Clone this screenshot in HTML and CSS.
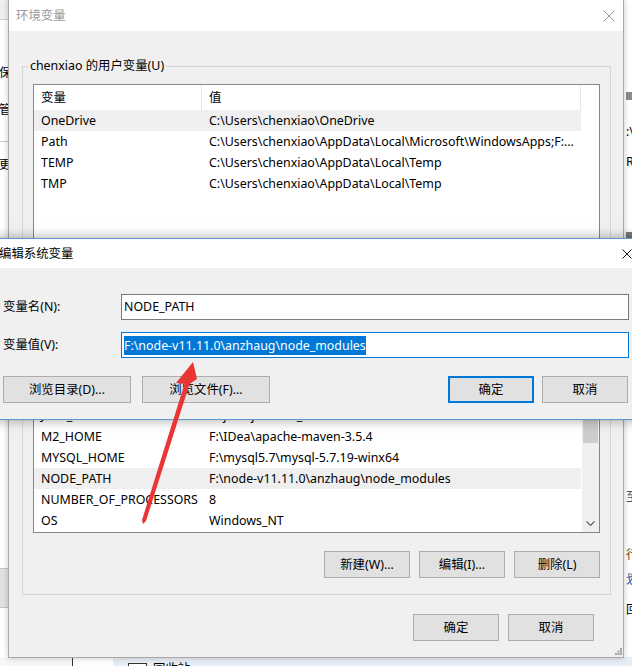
FILE: index.html
```html
<!DOCTYPE html>
<html lang="zh-CN">
<head>
<meta charset="utf-8">
<title>环境变量</title>
<link rel="stylesheet" href="styles.css">
</head>
<body>
<div class="bg bg-left">
  <div class="bl-top"></div>
  <div class="bl-t">保存</div>
  <div class="bl-t bl-t2">管理</div>
  <div class="bl-line"></div>
  <div class="bl-t bl-t3">更改</div>
  <div class="bl-band"></div>
</div>
<div class="bg bg-right">
  <div class="br-bar1"></div>
  <div class="br-t br-t1">:\W</div>
  <div class="br-t br-t2">R</div>
  <div class="br-bar2"></div>
  <div class="br-t br-t3">至</div>
  <div class="br-t br-t4">行</div>
  <div class="br-t br-t5">划</div>
  <div class="br-t br-t6">回</div>
</div>
<div class="bg bg-bottom">
  <div class="bb-a"></div>
  <div class="bb-b"></div>
  <div class="bb-c"><span class="bb-check"></span><span class="bb-text">回收站</span></div>
</div>

<div class="win main">
  <div class="titlebar">
    <span class="title inactive">环境变量</span>
    <svg class="close" width="12" height="12" viewBox="0 0 12 12"><path d="M0.5 0.5L11.5 11.5M11.5 0.5L0.5 11.5" stroke="#9a9a9a" stroke-width="1" fill="none"/></svg>
  </div>
  <div class="main-body">
    <fieldset class="group user">
      <legend>chenxiao 的用户变量(U)</legend>
      <div class="list">
        <div class="lhead"><div class="c1">变量</div><div class="c2">值</div></div>
        <div class="lrows">
          <div class="rows">
            <div class="row sel"><div class="c1">OneDrive</div><div class="c2">C:\Users\chenxiao\OneDrive</div></div>
            <div class="row"><div class="c1">Path</div><div class="c2">C:\Users\chenxiao\AppData\Local\Microsoft\WindowsApps;F:...</div></div>
            <div class="row"><div class="c1">TEMP</div><div class="c2">C:\Users\chenxiao\AppData\Local\Temp</div></div>
            <div class="row"><div class="c1">TMP</div><div class="c2">C:\Users\chenxiao\AppData\Local\Temp</div></div>
          </div>
        </div>
      </div>
      <div class="btns">
        <button class="btn">新建(N)...</button>
        <button class="btn">编辑(E)...</button>
        <button class="btn">删除(D)</button>
      </div>
    </fieldset>
    <fieldset class="group sys">
      <legend>系统变量(S)</legend>
      <div class="list">
        <div class="lhead"><div class="c1">变量</div><div class="c2">值</div></div>
        <div class="lrows">
          <div class="rows">
            <div class="row"><div class="c1">ComSpec</div><div class="c2">C:\Windows\system32\cmd.exe</div></div>
            <div class="row"><div class="c1">JAVA_HOME</div><div class="c2">F:\java\jdk1.8.0_191</div></div>
            <div class="row"><div class="c1">M2_HOME</div><div class="c2">F:\IDea\apache-maven-3.5.4</div></div>
            <div class="row"><div class="c1">MYSQL_HOME</div><div class="c2">F:\mysql5.7\mysql-5.7.19-winx64</div></div>
            <div class="row sel"><div class="c1">NODE_PATH</div><div class="c2">F:\node-v11.11.0\anzhaug\node_modules</div></div>
            <div class="row"><div class="c1">NUMBER_OF_PROCESSORS</div><div class="c2">8</div></div>
            <div class="row"><div class="c1">OS</div><div class="c2">Windows_NT</div></div>
          </div>
          <div class="sbar">
            <div class="sb-up"></div>
            <div class="sb-thumb"></div>
            <div class="sb-track"></div>
            <div class="sb-down"><svg width="9" height="6" viewBox="0 0 9 6"><path d="M0.5 0.5L4.5 4.5L8.5 0.5" stroke="#606060" stroke-width="1.2" fill="none"/></svg></div>
          </div>
        </div>
      </div>
      <div class="btns">
        <button class="btn">新建(W)...</button>
        <button class="btn">编辑(I)...</button>
        <button class="btn">删除(L)</button>
      </div>
    </fieldset>
    <div class="footer">
      <button class="btn">确定</button>
      <button class="btn">取消</button>
    </div>
  </div>
  <svg class="grip" width="7" height="7" viewBox="0 0 7 7"><g fill="#a0a0a0"><rect x="5" y="0" width="2" height="2"/><rect x="2.5" y="2.5" width="2" height="2"/><rect x="5" y="2.5" width="2" height="2"/><rect x="0" y="5" width="2" height="2"/><rect x="2.5" y="5" width="2" height="2"/><rect x="5" y="5" width="2" height="2"/></g></svg>
</div>

<div class="win dialog">
  <div class="dtitle">
    <span class="title">编辑系统变量</span>
    <svg class="close" width="10" height="10" viewBox="0 0 10 10"><path d="M0.5 0.5L9.5 9.5M9.5 0.5L0.5 9.5" stroke="#111" stroke-width="1" fill="none"/></svg>
  </div>
  <div class="dbody">
    <div class="frow">
      <label class="flabel">变量名(N):</label>
      <div class="finput">NODE_PATH</div>
    </div>
    <div class="frow">
      <label class="flabel">变量值(V):</label>
      <div class="finput focus"><span class="selected">F:\node-v11.11.0\anzhaug\node_modules</span></div>
    </div>
    <div class="dbtns">
      <button class="btn wide">浏览目录(D)...</button>
      <button class="btn wide">浏览文件(F)...</button>
      <span class="spacer"></span>
      <button class="btn default">确定</button>
      <button class="btn">取消</button>
    </div>
  </div>
</div>

<svg class="arrow" width="632" height="666" viewBox="0 0 632 666">
  <polygon points="193,362 197,379 189.5,384 146,521 143,524 142,520 184.5,384 176,383" fill="#ea3535"/>
</svg>
</body>
</html>
```

FILE: styles.css
```css
* { box-sizing: border-box; margin: 0; padding: 0; }
html, body { width: 632px; height: 666px; overflow: hidden; }
body {
  position: relative;
  background: #fff;
  font-family: "Noto Sans", "Noto Sans CJK SC", sans-serif;
  font-size: 12.4px;
  line-height: 16px;
  color: #000;
}

/* background windows */
.bg { position: absolute; overflow: hidden; }
.bg-left { left: -1px; top: 0; width: 20px; height: 657px; background: #fff; display: flex; flex-direction: column; }
.bl-top { height: 20px; background: #f0f0f0; border-bottom: 1px solid #cfcfcf; }
.bl-t { margin-top: 46px; line-height: 14px; white-space: nowrap; }
.bl-t2 { margin-top: 23px; }
.bl-line { margin-top: 24px; height: 1px; background: #c8c8c8; }
.bl-t3 { margin-top: 16px; }
.bl-band { margin-top: 396px; height: 40px; background: #e2e2e2; border-top: 1px solid #c6c6c6; border-bottom: 1px solid #c6c6c6; }

.bg-right { left: 623px; top: 0; width: 20px; height: 657px; background: #fff; display: flex; flex-direction: column; padding-left: 3px; }
.br-bar1 { margin-top: 92px; height: 8px; background: #8c8c8c; }
.br-t { line-height: 14px; white-space: nowrap; }
.br-t1 { margin-top: 25px; }
.br-t2 { margin-top: 16px; }
.br-bar2 { margin-top: 63px; height: 6px; background: #7a7a7a; }
.br-t3 { margin-top: 252px; color: #555; }
.br-t4 { margin-top: 44px; color: #7a4a10; }
.br-t5 { margin-top: 11px; color: #1f5fa8; }
.br-t6 { margin-top: 16px; }

.bg-bottom { left: 0; top: 657px; width: 632px; height: 9px; display: flex; background: #fff; }
.bb-a { width: 72px; background: #f7f7f7; }
.bb-b { width: 41px; border-left: 1px solid #333; background: #fff; }
.bb-c { flex: 1; background: #e8eef6; display: flex; align-items: flex-start; padding: 6px 0 0 15px; gap: 6px; }
.bb-check { width: 19px; height: 19px; border: 1px solid #333; background: #fff; }
.bb-text { margin-top: -1px; line-height: 14px; }

/* windows */
.win { position: absolute; display: flex; flex-direction: column; }
.main {
  left: 8px; top: -1px; width: 616px; height: 659px;
  border: 1px solid #a8a8a8; background: #f0f0f0;
  box-shadow: 0 0 6px rgba(0,0,0,.22);
}
.titlebar {
  height: 31px; flex: none; background: #fff;
  display: flex; align-items: center; justify-content: space-between;
  padding: 0 8px 0 7px;
}
.title { line-height: 16px; }
.title.inactive { color: #999; }
.close { display: block; flex: none; }

.main-body { flex: 1; display: flex; flex-direction: column; padding: 0 12px 0 13px; }
.group { border: 1px solid #d5d5d5; padding: 10px 10px 16px; min-width: 0; }
.group legend { padding: 0 2px; margin-left: -5px; line-height: 16px; }
.user { margin-top: 27px; }
.sys { margin-top: 11px; }

.list { height: 175px; border: 1px solid #828790; background: #fff; display: flex; flex-direction: column; }
.lhead { height: 25px; flex: none; display: flex; }
.lhead > div { display: flex; align-items: center; border-right: 1px solid #e5e5e5; }
.lrows { flex: 1; display: flex; min-height: 0; }
.rows { width: 547px; }
.row { display: flex; height: 21px; align-items: center; }
.row.sel { background: #efefef; }
.c1 { width: 168px; padding-left: 7px; white-space: nowrap; }
.c2 { width: 379px; padding-left: 7px; white-space: nowrap; overflow: hidden; }

.sbar { width: 17px; margin-left: 1px; background: #f0f0f0; display: flex; flex-direction: column; }
.sb-up { height: 17px; }
.sb-thumb { height: 41px; margin: 1px 1px 0; background: #cdcdcd; }
.sb-track { flex: 1; }
.sb-down { height: 17px; display: flex; align-items: center; justify-content: center; }

.btns { display: flex; justify-content: flex-end; gap: 9px; margin-top: 18px; }
.btn {
  width: 86px; height: 27px; flex: none;
  background: #e1e1e1; border: 1px solid #adadad;
  font: inherit; color: #000; line-height: 16px;
}
.btn.wide { width: 128px; }
.btn.default { border: 2px solid #0078d7; }

.footer { display: flex; justify-content: flex-end; gap: 9px; margin-top: 19px; padding-right: 17px; }

.grip { position: absolute; right: 1px; bottom: 2px; }

/* dialog */
.dialog {
  left: -10px; top: 238px; width: 660px; height: 182px;
  border: 1px solid #5f97d1; background: #f0f0f0;
  box-shadow: 0 0 12px rgba(0,0,0,.35);
}
.dtitle {
  height: 29px; flex: none; background: #fff;
  display: flex; align-items: center; justify-content: space-between;
  padding: 0 17px 0 8px;
}
.dbody { flex: 1; display: flex; flex-direction: column; padding: 26px 20px 0 12px; }
.frow { display: flex; align-items: center; height: 26px; }
.frow + .frow { margin-top: 12px; }
.flabel { width: 118px; flex: none; }
.finput {
  flex: 1; height: 26px; border: 1px solid #7a7a7a; background: #fff;
  padding-left: 2px; display: flex; align-items: center; white-space: nowrap;
}
.finput.focus { border-color: #0078d7; }
.selected { background: #0078d7; color: #fff; line-height: 19px; }
.dbtns { display: flex; gap: 11px; margin-top: 18px; margin-right: 1px; }
.dbtns .spacer { flex: 1; }
.dbtns .default { margin-right: -3px; }

.arrow { position: absolute; left: 0; top: 0; pointer-events: none; }
```
